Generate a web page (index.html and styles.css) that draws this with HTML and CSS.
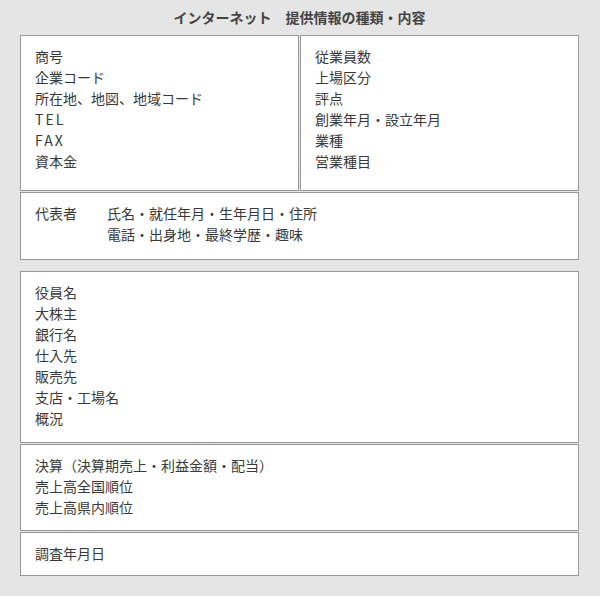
FILE: index.html
```html
<!DOCTYPE html>
<html lang="ja">
<head>
<meta charset="utf-8">
<title>インターネット 提供情報の種類・内容</title>
<link rel="stylesheet" href="styles.css">
</head>
<body>
<div class="page">
  <h1 class="title">インターネット　提供情報の種類・内容</h1>
  <div class="row">
    <div class="box half">
      <div>商号</div>
      <div>企業コード</div>
      <div>所在地、地図、地域コード</div>
      <div class="latin">TEL</div>
      <div class="latin">FAX</div>
      <div>資本金</div>
    </div>
    <div class="box half">
      <div>従業員数</div>
      <div>上場区分</div>
      <div>評点</div>
      <div>創業年月・設立年月</div>
      <div>業種</div>
      <div>営業種目</div>
    </div>
  </div>
  <div class="box rep">
    <div class="rep-label">代表者</div>
    <div class="rep-items">
      <div>氏名・就任年月・生年月日・住所</div>
      <div>電話・出身地・最終学歴・趣味</div>
    </div>
  </div>
  <div class="box officers">
    <div>役員名</div>
    <div>大株主</div>
    <div>銀行名</div>
    <div>仕入先</div>
    <div>販売先</div>
    <div>支店・工場名</div>
    <div>概況</div>
  </div>
  <div class="box settle">
    <div>決算（決算期売上・利益金額・配当）</div>
    <div>売上高全国順位</div>
    <div>売上高県内順位</div>
  </div>
  <div class="box survey">
    <div>調査年月日</div>
  </div>
</div>
</body>
</html>
```

FILE: styles.css
```css
html, body {
  margin: 0;
  padding: 0;
  background: #e5e5e5;
}
body {
  font-family: "Noto Sans CJK JP", "Noto Sans", sans-serif;
  font-size: 14px;
  color: #3a3a3a;
}
.page {
  width: 559px;
  margin-left: 20px;
  display: flex;
  flex-direction: column;
}
.title {
  margin: 0;
  height: 35px;
  line-height: 35px;
  font-size: 14px;
  font-weight: bold;
  color: #444444;
  text-align: center;
}
.row {
  display: flex;
  gap: 1px;
}
.box {
  background: #ffffff;
  border: 1px solid #999999;
  line-height: 21px;
  padding: 10px 14px 12px;
}
.half {
  flex: 1 1 0;
  padding-bottom: 18px;
}
.latin {
  letter-spacing: 2px;
}
.rep {
  margin-top: 1px;
  padding-bottom: 14px;
  display: grid;
  grid-template-columns: 72px auto;
}
.officers {
  margin-top: 11px;
  padding-bottom: 13px;
}
.settle {
  margin-top: 1px;
}
.survey {
  margin-top: 1px;
  padding-bottom: 11px;
}
```
